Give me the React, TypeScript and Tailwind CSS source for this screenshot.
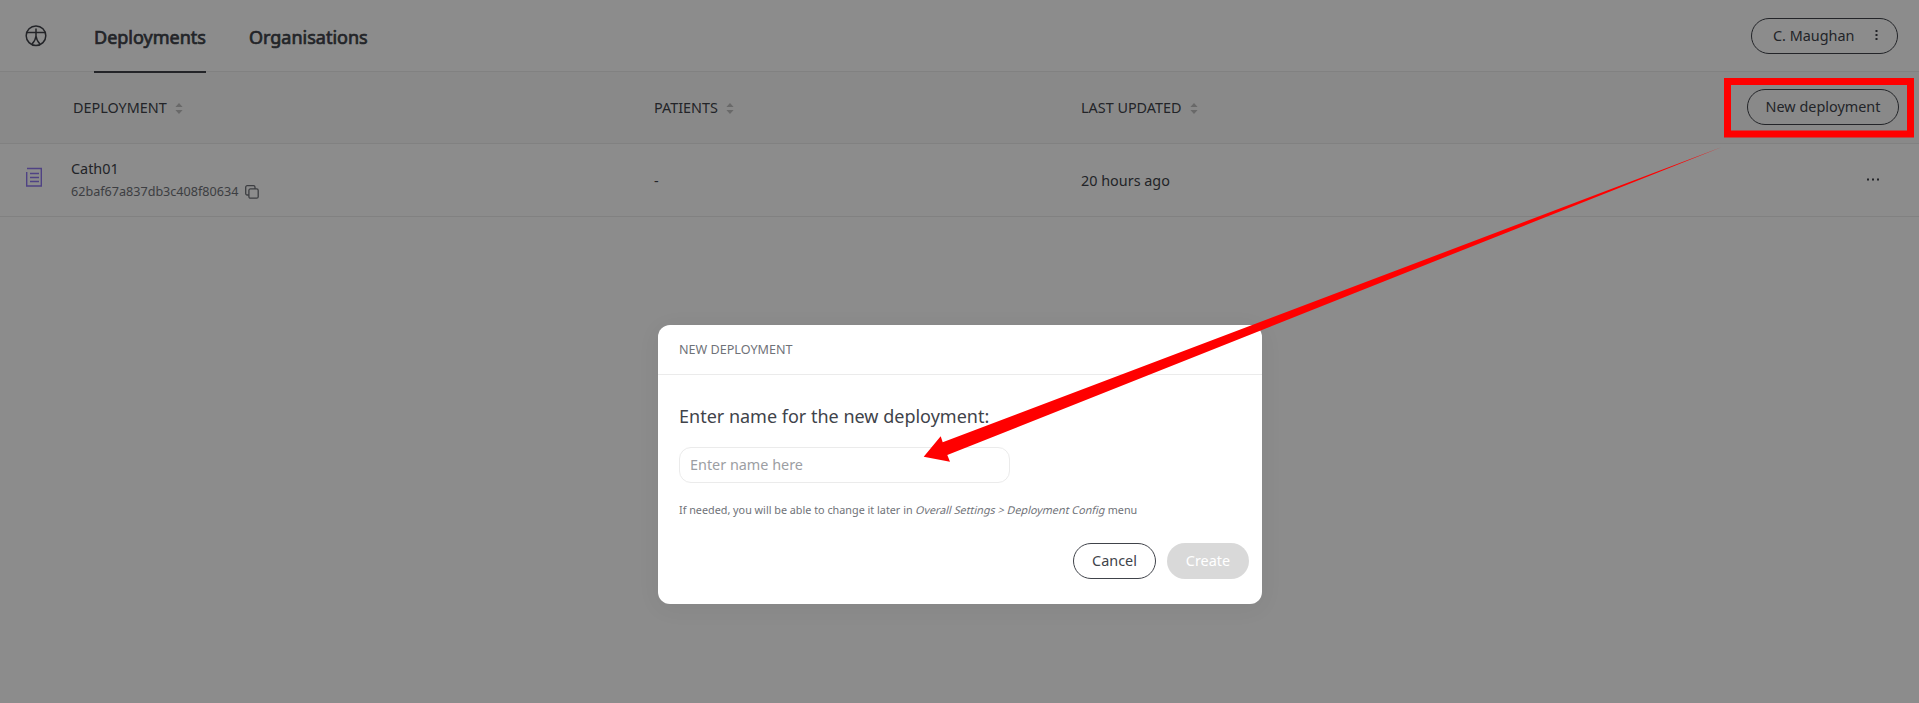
import React from "react";

const tabs = [
  { label: "Deployments", active: true },
  { label: "Organisations", active: false },
];

function BodyIcon() {
  return (
    <svg width="24" height="24" viewBox="0 0 24 24" fill="none" stroke="#40434a" strokeWidth="1.5">
      <circle cx="12" cy="11.700" r="9.800" />
      <path d="M12 4.500v8M2.800 8.500h18.400M12 12c-.3 3-1.500 5.500-4 8M12 12c.3 3 1.500 5.500 4 8" />
    </svg>
  );
}

function DocumentIcon() {
  return (
    <svg width="16" height="20" viewBox="0 0 16 20" fill="none" stroke="#9078f0" strokeWidth="1.4">
      <path d="M1 1.500h14.300v17.500H.7V5" />
      <path d="M4 6.500h9M4 10.500h9M4 14.500h9" />
    </svg>
  );
}

function CopyIcon() {
  return (
    <svg width="14" height="14" viewBox="0 0 14 14" fill="none" stroke="#6f7278" strokeWidth="1.3">
      <rect x="3.900" y="3.900" width="9.300" height="9.300" rx="1.500" />
      <path d="M3.900 10H2.200A1.500 1.500 0 0 1 .7 8.500V2.200A1.500 1.500 0 0 1 2.200.7h6.300a1.500 1.500 0 0 1 1.500 1.500v1.700" />
    </svg>
  );
}

function Sorter() {
  return (
    <svg width="8" height="11" viewBox="0 0 8 11" fill="#bfbfbf" className="mt-[3px]">
      <path d="M4 0 7.600 4H.4zM4 11 .4 7h7.200z" />
    </svg>
  );
}

function ColumnTitle({ label }: { label: string }) {
  return (
    <div className="flex items-center gap-2">
      <span>{label}</span>
      <Sorter />
    </div>
  );
}

function Header() {
  return (
    <header className="relative z-10 flex h-[72px] items-start justify-between border-b border-[#ebebeb] pr-[21px] pl-6">
      <div className="flex">
        <div className="mt-6">
          <BodyIcon />
        </div>
        <nav className="ml-[46px] flex gap-[43px]">
          {tabs.map((tab) => (
            <a
              key={tab.label}
              className={
                tab.active
                  ? "h-[73px] border-b-2 border-[#40434a] pt-6 text-[18px] leading-[26px] [-webkit-text-stroke:0.7px_#40434a]"
                  : "h-[73px] pt-6 text-[18px] leading-[26px] [-webkit-text-stroke:0.7px_#40434a]"
              }
            >
              {tab.label}
            </a>
          ))}
        </nav>
      </div>
      <button className="mt-[18px] flex h-9 w-[147px] items-center justify-between rounded-full border border-[#40434a] pr-[19px] pl-[21px] text-[14.4px]">
        <span>C. Maughan</span>
        <svg width="3" height="12" viewBox="0 0 3 12" fill="#40434a" className="-mt-0.5">
          <path d="M.5 1h2v2h-2zM.5 5h2v2h-2zM.5 9h2v2h-2z" />
        </svg>
      </button>
    </header>
  );
}

function DeploymentsTable() {
  return (
    <section className="text-[14.4px]">
      <div className="grid h-[72px] grid-cols-[73px_581px_427px_1fr_auto] items-center border-b border-[#ebebeb] bg-[#fafafa] pr-5">
        <span />
        <ColumnTitle label="DEPLOYMENT" />
        <ColumnTitle label="PATIENTS" />
        <ColumnTitle label="LAST UPDATED" />
        <button className="mb-0.5 h-9 w-[152px] rounded-full border border-[#40434a]">New deployment</button>
      </div>
      <div className="grid h-[73px] grid-cols-[71px_583px_427px_1fr_auto] items-center border-b border-[#ebebeb] pr-[39px]">
        <div className="pb-[6px] pl-[26px]">
          <DocumentIcon />
        </div>
        <div>
          <div className="leading-[22px]">Cath01</div>
          <div className="flex items-center gap-[7px] text-[12.6px] leading-[22px] text-[#6f7278]">
            <span className="pt-px">62baf67a837db3c408f80634</span>
            <span className="pt-0.5">
              <CopyIcon />
            </span>
          </div>
        </div>
        <span className="pt-px">-</span>
        <span className="pt-px">20 hours ago</span>
        <svg width="14" height="3" viewBox="0 0 14 3" fill="#40434a" className="-mt-0.5">
          <path d="M1 .5h2v2H1zM6 .5h2v2H6zM11 .5h2v2h-2z" />
        </svg>
      </div>
    </section>
  );
}

function NewDeploymentModal() {
  return (
    <div className="h-[279px] w-[604px] rounded-xl bg-white shadow-[0_4px_24px_rgba(0,0,0,0.05)]">
      <div className="flex h-[50px] items-center border-b border-[#ebebeb] px-[21px] pt-0.5 text-[12.6px] text-[#6f7278]">
        NEW DEPLOYMENT
      </div>
      <div className="pt-7 pr-[13px] pl-[21px]">
        <h2 className="text-[18px] leading-[26px]">Enter name for the new deployment:</h2>
        <input
          placeholder="Enter name here"
          className="mt-[18px] block h-9 w-[331px] rounded-xl border border-[#ebebeb] px-2.5 pb-0.5 text-[14.4px] placeholder:text-[#9c9ea3]"
        />
        <p className="mt-[18px] text-[10.8px] leading-[18px] text-[#6f7278]">
          If needed, you will be able to change it later in{" "}
          <span className="mr-[-1px] ml-px inline-block -skew-x-14">Overall Settings &gt; Deployment Config</span> menu
        </p>
        <div className="mt-6 flex justify-end gap-[11px] text-[14.4px]">
          <button className="h-9 w-[83px] rounded-full border border-[#40434a]">Cancel</button>
          <button className="h-9 w-[82px] rounded-full bg-[#d9d9d9] text-white">Create</button>
        </div>
      </div>
    </div>
  );
}

export default function App() {
  return (
    <div className="relative h-[703px] w-full overflow-hidden bg-white font-['Noto_Sans',sans-serif] text-[#40434a]">
      <Header />
      <DeploymentsTable />
      <div className="absolute inset-0 z-20 flex items-start justify-center bg-black/45 pt-[325px] pl-px">
        <NewDeploymentModal />
      </div>
      <svg className="pointer-events-none absolute inset-0 z-30" width="1919" height="703" viewBox="0 0 1919 703">
        <rect x="1727.500" y="81.500" width="183" height="52.500" fill="none" stroke="#f00" strokeWidth="7" />
        <path d="M923.700 456.700 940.700 436.300 942.700 442.300 1722 147 947.300 455 950 461.700z" fill="#f00" />
      </svg>
    </div>
  );
}
